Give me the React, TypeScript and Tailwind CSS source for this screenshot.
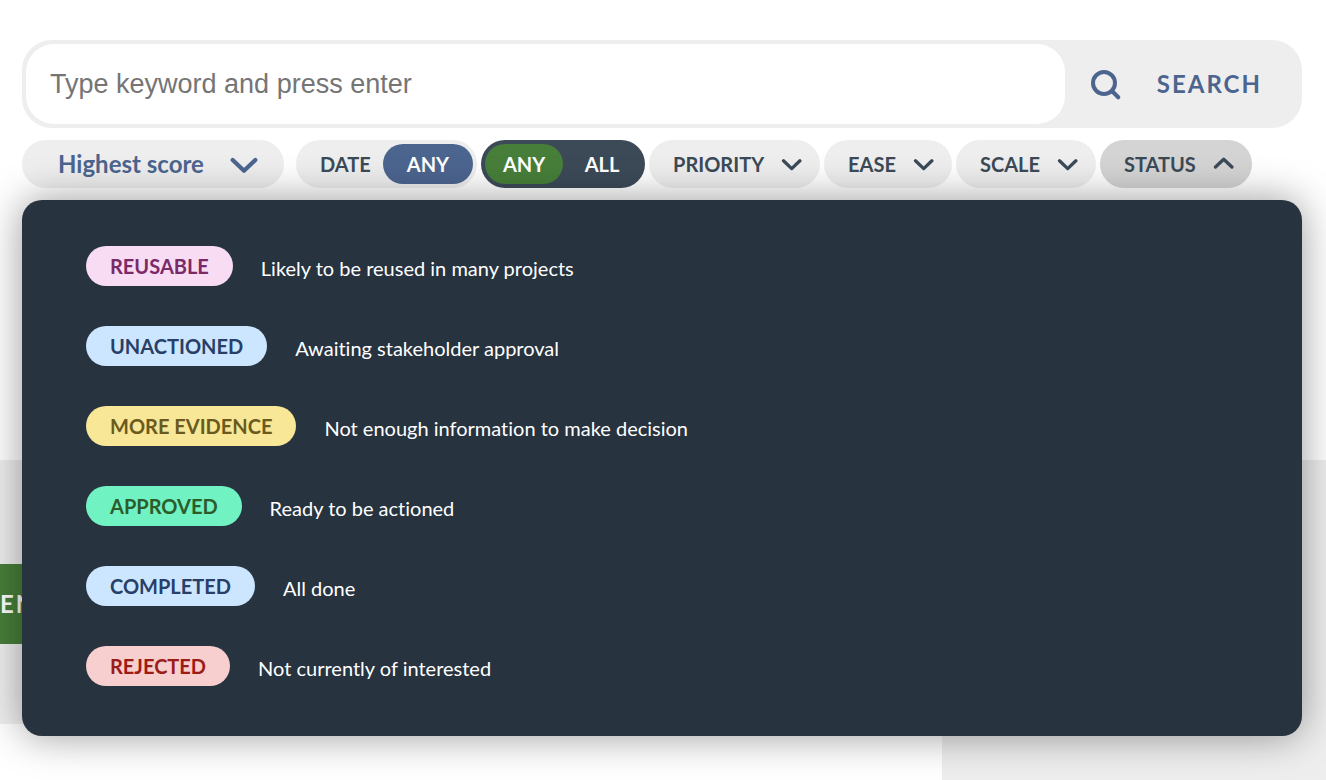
import { useState } from "react";
import clsx from "clsx";

const FILTERS = ["Priority", "Ease", "Scale", "Status"];

const STATUSES = [
  { label: "Reusable", text: "Likely to be reused in many projects", color: "bg-[#f8dcf4] text-[#7a2a67]" },
  { label: "Unactioned", text: "Awaiting stakeholder approval", color: "bg-[#cce6ff] text-[#283f68]" },
  { label: "More evidence", text: "Not enough information to make decision", color: "bg-[#f7e797] text-[#6b5a1e]" },
  { label: "Approved", text: "Ready to be actioned", color: "bg-[#70f2c2] text-[#2c5c2a]" },
  { label: "Completed", text: "All done", color: "bg-[#cce6ff] text-[#283f68]" },
  { label: "Rejected", text: "Not currently of interested", color: "bg-[#f7cfcf] text-[#9c1c16]" },
];

function Chevron({ up = false }: { up?: boolean }) {
  return (
    <svg width="22" height="14" viewBox="0 0 22 14" fill="none" aria-hidden="true">
      <path
        d={up ? "M3.5 10 11.7 2.2l8.2 7.8" : "M3.5 3.8l8.2 7.8 8.2-7.8"}
        stroke="currentColor"
        strokeWidth="3.3"
        strokeLinecap="round"
        strokeLinejoin="round"
      />
    </svg>
  );
}

function SearchBar() {
  return (
    <form
      role="search"
      className="flex rounded-[30px] bg-[#eeeeee] p-1"
      onSubmit={(e) => e.preventDefault()}
    >
      <input
        type="search"
        aria-label="Keyword"
        placeholder="Type keyword and press enter"
        className="h-20 min-w-0 flex-1 rounded-[28px] bg-white px-6 font-['Liberation_Sans',sans-serif] text-[27px] placeholder:text-[#757575]"
      />
      <button
        type="submit"
        className="flex items-center gap-[34px] pr-9 pl-6 text-2xl font-bold tracking-[2px] text-[#4c658f]"
      >
        <svg width="34" height="34" viewBox="0 0 34 34" fill="none" aria-hidden="true">
          <circle cx="15" cy="16" r="11" stroke="currentColor" strokeWidth="4" />
          <path d="m23.5 24.5 5.7 5.7" stroke="currentColor" strokeWidth="4.2" strokeLinecap="round" />
        </svg>
        SEARCH
      </button>
    </form>
  );
}

function SortSelect() {
  return (
    <div className="relative mr-2 w-[262px] shrink-0 text-[#4c658f]">
      <select
        aria-label="Sort by"
        className="h-12 w-full appearance-none rounded-full bg-[#eeeeee] px-9 text-2xl font-bold"
      >
        <option>Highest score</option>
        <option>Newest</option>
      </select>
      <svg
        className="pointer-events-none absolute top-4 right-6"
        width="32"
        height="18"
        viewBox="0 0 32 18"
        fill="none"
        aria-hidden="true"
      >
        <path
          d="M4.7 4 16 14.8 27.3 4"
          stroke="currentColor"
          strokeWidth="4.2"
          strokeLinecap="round"
          strokeLinejoin="round"
        />
      </svg>
    </div>
  );
}

function StatusPanel() {
  return (
    <ul className="absolute inset-x-0 top-full mt-3 flex flex-col gap-10 rounded-[20px] bg-[#27333f] px-16 pt-[46px] pb-[50px] shadow-[0_0_40px_rgba(0,0,0,0.4)]">
      {STATUSES.map((status) => (
        <li key={status.label} className="flex items-center gap-7">
          <button
            type="button"
            className={clsx("h-10 rounded-full px-6 text-xl font-bold uppercase", status.color)}
          >
            {status.label}
          </button>
          <span className="pt-1 text-xl text-white [font-variant-ligatures:none]">
            {status.text}
          </span>
        </li>
      ))}
    </ul>
  );
}

export default function App() {
  const [open, setOpen] = useState("Status");
  const [match, setMatch] = useState("Any");

  return (
    <div className="flex min-h-screen flex-col bg-white font-[Lato,sans-serif]">
      <header className="relative z-10 flex h-[460px] flex-col pt-10 pr-6 pl-[22px]">
        <SearchBar />
        <div className="relative mt-3">
          <div className="flex gap-1 text-xl font-bold text-[#3c4a58]">
            <SortSelect />
            <div className="flex items-center gap-3 rounded-full bg-[#eeeeee] py-1 pr-1 pl-6">
              <span id="date-label">DATE</span>
              <button
                type="button"
                aria-describedby="date-label"
                className="h-10 rounded-full bg-[#4c658f] px-6 text-white"
              >
                ANY
              </button>
            </div>
            <div className="grid w-[164px] grid-cols-2 rounded-full bg-[#3c4a58] p-1 text-white">
              {["Any", "All"].map((option) => (
                <button
                  key={option}
                  type="button"
                  aria-pressed={match === option}
                  onClick={() => setMatch(option)}
                  className={clsx(
                    "h-10 rounded-full uppercase",
                    match === option && "bg-[#477f3a]",
                  )}
                >
                  {option}
                </button>
              ))}
            </div>
            {FILTERS.map((filter) => (
              <button
                key={filter}
                type="button"
                aria-expanded={open === filter}
                onClick={() => setOpen(open === filter ? "" : filter)}
                className={clsx(
                  "flex h-12 items-center gap-4 rounded-full pr-[18px] pl-6 uppercase",
                  open === filter ? "bg-[#d4d4d4]" : "bg-[#eeeeee]",
                )}
              >
                {filter}
                <Chevron up={open === filter} />
              </button>
            ))}
          </div>
          {open === "Status" && <StatusPanel />}
        </div>
      </header>
      <section className="h-[264px] bg-[#eeeeee] pt-[104px]">
        <button
          type="button"
          className="flex h-20 w-[120px] items-center bg-[#477f3a] text-2xl font-bold tracking-[2px] text-white"
        >
          EN
        </button>
      </section>
      <div className="flex flex-1 justify-end">
        <aside className="w-96 bg-[#eeeeee]" />
      </div>
    </div>
  );
}
